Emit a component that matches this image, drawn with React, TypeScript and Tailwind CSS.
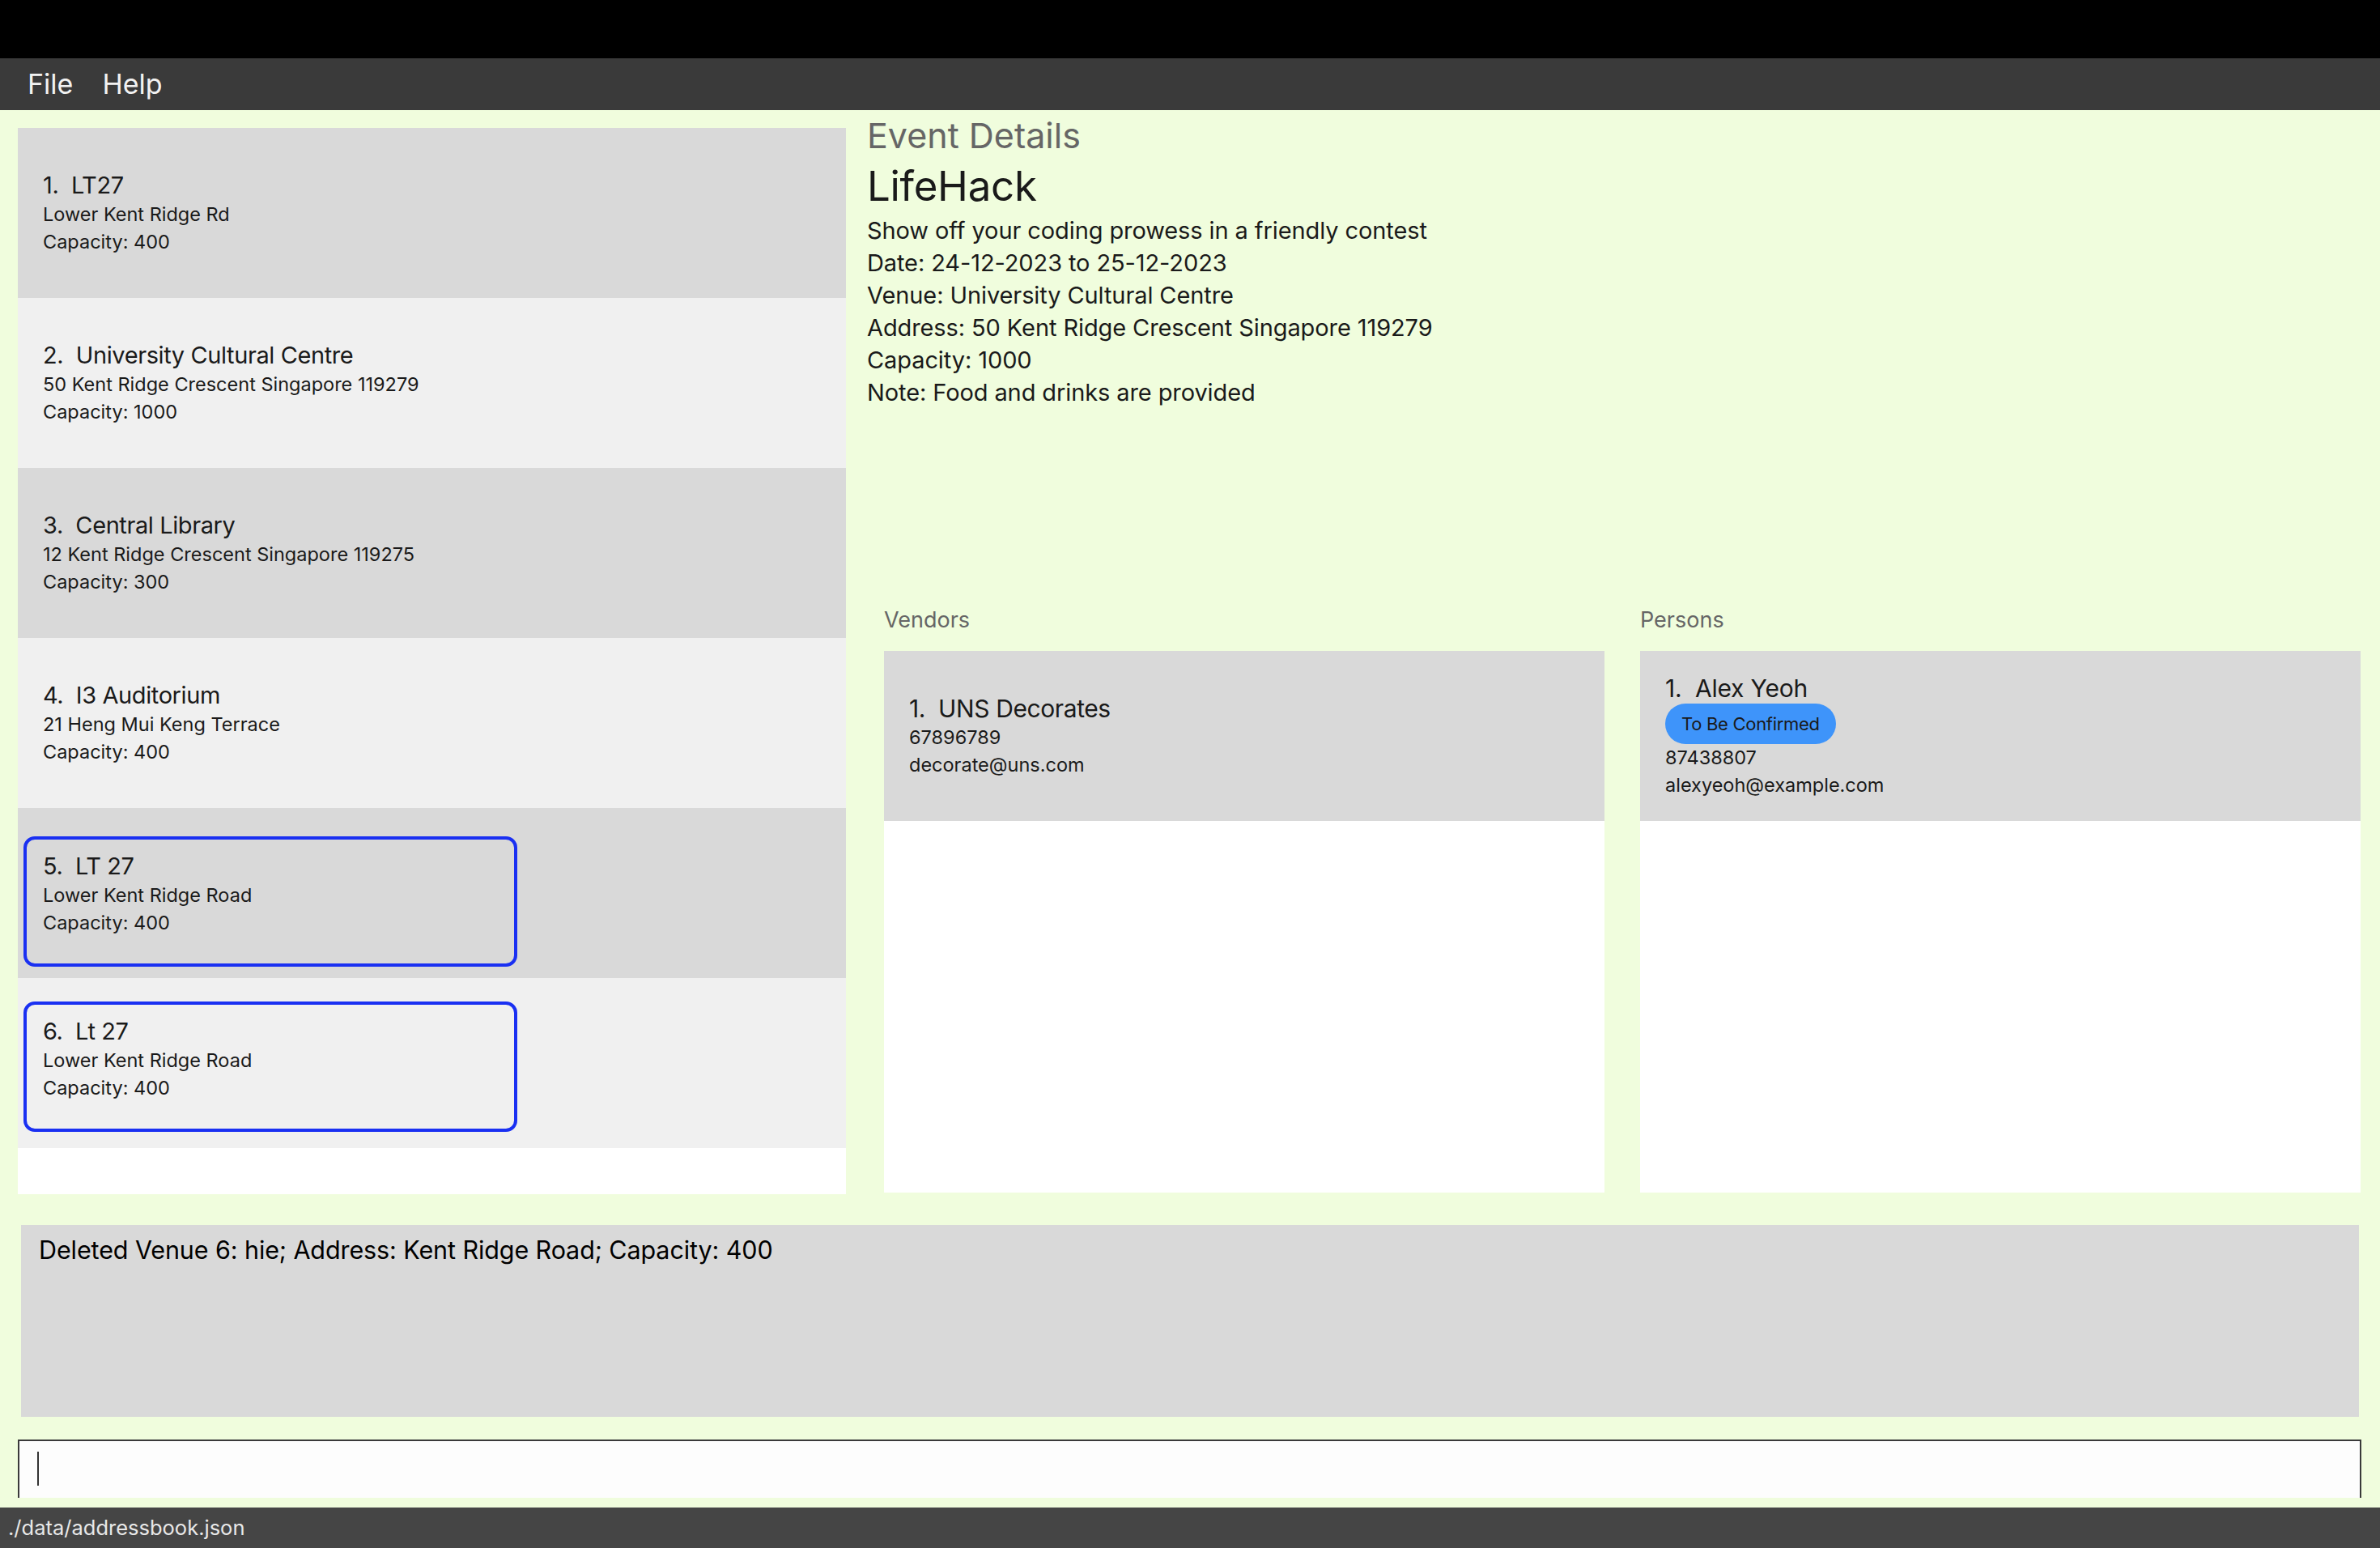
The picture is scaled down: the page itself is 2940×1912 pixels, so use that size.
import React from "react";

type Venue = {
  name: string;
  address: string;
  capacity: string;
  selected?: boolean;
  pad?: string;
};

const venues: Venue[] = [
  { name: "LT27", address: "Lower Kent Ridge Rd", capacity: "400" },
  { name: "University Cultural Centre", address: "50 Kent Ridge Crescent Singapore 119279", capacity: "1000" },
  { name: "Central Library", address: "12 Kent Ridge Crescent Singapore 119275", capacity: "300" },
  { name: "I3 Auditorium", address: "21 Heng Mui Keng Terrace", capacity: "400" },
  { name: "LT 27", address: "Lower Kent Ridge Road", capacity: "400", selected: true, pad: "pt-[35px]" },
  { name: "Lt 27", address: "Lower Kent Ridge Road", capacity: "400", selected: true, pad: "pt-[29px]" },
];

const details = [
  "Show off your coding prowess in a friendly contest",
  "Date: 24-12-2023 to 25-12-2023",
  "Venue: University Cultural Centre",
  "Address: 50 Kent Ridge Crescent Singapore 119279",
  "Capacity: 1000",
  "Note: Food and drinks are provided",
];

function VenueText({ index, venue }: { index: number; venue: Venue }) {
  return (
    <>
      <div className="text-[29px] leading-[38px] tracking-[-0.4px] whitespace-pre">
        {index}.  {venue.name}
      </div>
      <div className="text-[23.5px] leading-[34px]">{venue.address}</div>
      <div className="text-[23.5px] leading-[34px]">Capacity: {venue.capacity}</div>
    </>
  );
}

function VenueCell({ index, venue }: { index: number; venue: Venue }) {
  const bg = index % 2 === 1 ? "bg-[#d9d9d9]" : "bg-[#f0f0f0]";
  if (venue.selected) {
    return (
      <div className={`h-[210px] shrink-0 ${bg} ${venue.pad} pl-[7px]`}>
        <div className="w-[610px] h-[161px] border-[4px] border-[#1a30f2] rounded-[14px] pl-[20px] pt-[14px]">
          <VenueText index={index} venue={venue} />
        </div>
      </div>
    );
  }
  return (
    <div className={`h-[210px] shrink-0 ${bg} flex flex-col justify-center pl-[31px]`}>
      <VenueText index={index} venue={venue} />
    </div>
  );
}

export default function App() {
  return (
    <div
      className="w-[2940px] h-[1912px] flex flex-col bg-[#f0fddd] text-[#1a1a1a] overflow-hidden"
      style={{ fontFamily: 'Inter, "Noto Sans", sans-serif' }}
    >
      <div className="h-[72px] shrink-0 bg-black" />

      <div className="h-[64px] shrink-0 bg-[#3a3a3a] flex items-center text-[34px] leading-[64px] text-[#f2f2f2]">
        <span className="ml-[34px]">File</span>
        <span className="ml-[36px]">Help</span>
      </div>

      <div className="h-[1339px] shrink-0 flex items-start">
        {/* venue list */}
        <div className="mt-[22px] ml-[22px] w-[1023px] h-[1317px] bg-white flex flex-col">
          {venues.map((v, i) => (
            <VenueCell key={i} index={i + 1} venue={v} />
          ))}
        </div>

        {/* event details */}
        <div className="ml-[26px] mt-[7px] w-[1845px] h-[1332px] flex flex-col">
          <div className="text-[43px] leading-[48px] text-[#666666]">Event Details</div>
          <div className="mt-[9px] text-[51px] leading-[60px] tracking-[-0.3px] text-[#1a1a1a]">LifeHack</div>
          <div className="mt-[5px] flex flex-col">
            {details.map((line) => (
              <div key={line} className="text-[29px] leading-[40px] tracking-[-0.1px]">
                {line}
              </div>
            ))}
          </div>

          <div className="flex-1" />

          <div className="flex mb-[2px] pl-[21px] gap-[44px]">
            <div className="w-[890px] flex flex-col">
              <div className="text-[27px] leading-[36px] text-[#666666]">Vendors</div>
              <div className="mt-[20px] h-[669px] bg-white">
                <div className="h-[210px] bg-[#d9d9d9] flex flex-col justify-center pl-[31px]">
                  <div className="text-[30px] leading-[38px] tracking-[-0.4px] whitespace-pre">1.  UNS Decorates</div>
                  <div className="text-[23.5px] leading-[34px]">67896789</div>
                  <div className="text-[23.5px] leading-[34px]">decorate@uns.com</div>
                </div>
              </div>
            </div>

            <div className="w-[890px] flex flex-col">
              <div className="text-[27px] leading-[36px] text-[#666666]">Persons</div>
              <div className="mt-[20px] h-[669px] bg-white">
                <div className="h-[210px] bg-[#d9d9d9] flex flex-col justify-center items-start pl-[31px]">
                  <div className="text-[30px] leading-[38px] tracking-[-0.2px] whitespace-pre">1.  Alex Yeoh</div>
                  <div className="h-[50px] px-[20px] rounded-full bg-[#3e94fa] flex items-center text-[22px] tracking-[-0.3px] text-[#1a1a1a]">
                    To Be Confirmed
                  </div>
                  <div className="text-[23.5px] leading-[34px]">87438807</div>
                  <div className="text-[23.5px] leading-[34px]">alexyeoh@example.com</div>
                </div>
              </div>
            </div>
          </div>
        </div>
      </div>

      {/* result display */}
      <div className="mt-[38px] ml-[26px] w-[2888px] h-[237px] shrink-0 bg-[#d9d9d9] pl-[22px] pt-[13px]">
        <div className="text-[30.5px] leading-[36px] tracking-[-0.1px] text-black">
          Deleted Venue 6: hie; Address: Kent Ridge Road; Capacity: 400
        </div>
      </div>

      {/* command box */}
      <div className="mt-[28px] ml-[22px] w-[2895px] h-[72px] shrink-0 bg-[#fdfdfd] border-t-2 border-x-2 border-[#3a3a3a] flex items-start pl-[22px] pt-[13px]">
        <div className="w-[2px] h-[42px] bg-[#333333]" />
      </div>

      <div className="flex-1" />

      <div className="h-[50px] shrink-0 bg-[#454545] text-[25.5px] leading-[50px] text-[#e8e8e8] pl-[10px]">
        ./data/addressbook.json
      </div>
    </div>
  );
}
